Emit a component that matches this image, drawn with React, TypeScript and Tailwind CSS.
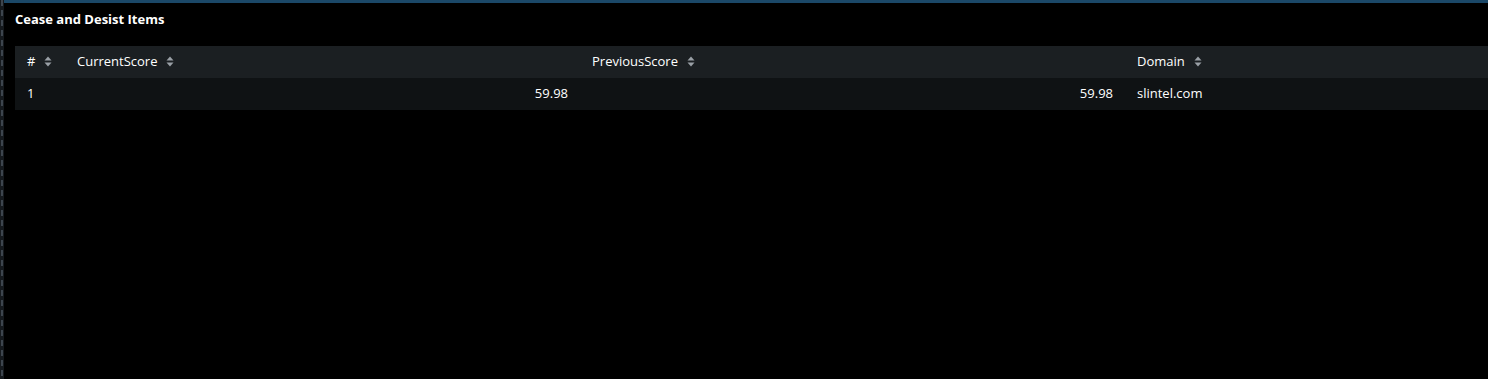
import React from "react";

function SortIcon() {
  return (
    <svg width="8" height="11" viewBox="0 0 8 11" className="ml-[9px] inline-block align-[-1px]">
      <path d="M4 0.5 L7.5 4.5 H0.5 Z" fill="#9aa0a6" />
      <path d="M4 10.5 L7.5 6.5 H0.5 Z" fill="#9aa0a6" />
    </svg>
  );
}

export default function App() {
  return (
    <div className="flex h-[379px] w-[1488px] bg-black font-['Open_Sans',sans-serif] text-[13px] text-white">
      <div className="w-[4px] shrink-0 bg-[#15191d] flex">
        <div className="ml-[1px] w-[2px] h-full bg-[repeating-linear-gradient(to_bottom,#3d454e_0px,#3d454e_6px,transparent_6px,transparent_10px)]" />
      </div>
      <div className="flex-1 flex flex-col">
        <div className="h-[3px] bg-[#1b4868]" />
        <div className="pl-[11px] pt-[7px] pb-[18px] text-[13px] font-bold leading-[18px]">Cease and Desist Items</div>
        <div className="pl-[11px]">
          <table className="w-full border-collapse table-fixed">
            <colgroup>
              <col className="w-[50px]" />
              <col className="w-[515px]" />
              <col className="w-[545px]" />
              <col />
            </colgroup>
            <thead>
              <tr className="h-[32px] bg-[#1b1f22]">
                <th className="px-[12px] py-0 text-left font-normal whitespace-nowrap">#<SortIcon /></th>
                <th className="px-[12px] py-0 text-left font-normal whitespace-nowrap">CurrentScore<SortIcon /></th>
                <th className="px-[12px] py-0 text-left font-normal whitespace-nowrap">PreviousScore<SortIcon /></th>
                <th className="px-[12px] py-0 text-left font-normal whitespace-nowrap">Domain<SortIcon /></th>
              </tr>
            </thead>
            <tbody>
              <tr className="h-[32px] bg-[#0f1214]">
                <td className="px-[12px] py-0 text-left">1</td>
                <td className="px-[12px] py-0 text-right">59.98</td>
                <td className="px-[12px] py-0 text-right">59.98</td>
                <td className="px-[12px] py-0 text-left">slintel.com</td>
              </tr>
            </tbody>
          </table>
        </div>
      </div>
    </div>
  );
}
